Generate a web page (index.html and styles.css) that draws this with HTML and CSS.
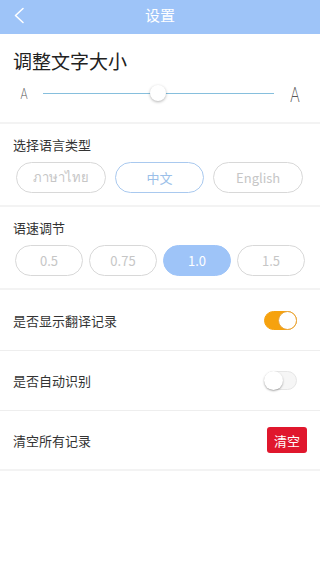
FILE: index.html
```html
<!DOCTYPE html>
<html lang="zh">
<head>
<meta charset="utf-8">
<title>设置</title>
<link rel="stylesheet" href="styles.css">
</head>
<body>
<header class="topbar">
  <svg class="back" width="34" height="34" viewBox="0 0 34 34"><polyline points="23,8.5 15.5,15.5 23,22.5" fill="none" stroke="#fff" stroke-width="1.6" stroke-linecap="round" stroke-linejoin="round"/></svg>
  <div class="title">设置</div>
</header>

<section class="fontsize">
  <div class="big-title">调整文字大小</div>
  <div class="slider-row">
    <span class="a-cell a-cell-left"><span class="a-small">A</span></span>
    <div class="track"><span class="thumb"></span></div>
    <span class="a-cell a-cell-right"><span class="a-big">A</span></span>
  </div>
</section>

<section class="choice">
  <div class="label">选择语言类型</div>
  <div class="grid3">
    <div class="pill">ภาษาไทย</div>
    <div class="pill pill-outline">中文</div>
    <div class="pill">English</div>
  </div>
</section>

<section class="choice">
  <div class="label">语速调节</div>
  <div class="grid4">
    <div class="pill">0.5</div>
    <div class="pill">0.75</div>
    <div class="pill pill-fill">1.0</div>
    <div class="pill">1.5</div>
  </div>
</section>

<div class="rows">
  <div class="row row-first">
    <span class="row-label">是否显示翻译记录</span>
    <span class="toggle on"><span class="knob"></span></span>
  </div>
  <div class="row">
    <span class="row-label">是否自动识别</span>
    <span class="toggle"><span class="knob"></span></span>
  </div>
  <div class="row row-last">
    <span class="row-label">清空所有记录</span>
    <span class="clear-btn">清空</span>
  </div>
</div>
</body>
</html>
```

FILE: styles.css
```css
* { box-sizing: border-box; margin: 0; padding: 0; }
html, body { background: #fff; }
body {
  width: 320px;
  font-family: "Noto Sans CJK SC", "Noto Sans", sans-serif;
  color: #333;
}

.topbar {
  height: 34px;
  background: #9ec4f8;
  position: relative;
  display: flex;
  align-items: center;
  justify-content: center;
}
.back { position: absolute; left: 0; top: 0; }
.title {
  color: #fff;
  font-size: 15px;
  line-height: 20px;
  margin-top: -4px;
}

.fontsize {
  height: 90px;
  padding-top: 15px;
  border-bottom: 2px solid #f3f3f3;
}
.big-title {
  font-size: 19px;
  line-height: 24px;
  padding-left: 13px;
  color: #222;
}
.slider-row {
  margin-top: 8px;
  height: 24px;
  display: flex;
  align-items: center;
}
.a-cell {
  display: flex;
  align-items: center;
  height: 24px;
  font-family: "Lato", "DejaVu Sans", sans-serif;
  font-weight: 300;
  color: #555;
}
.a-cell-left { width: 43px; padding-left: 19px; }
.a-cell-right { width: 46px; padding-left: 14px; }
.a-small {
  display: inline-block;
  font-size: 15px;
  transform: scaleX(0.72);
}
.a-big {
  display: inline-block;
  font-size: 21px;
  transform: scaleX(0.68);
}
.track {
  flex: 1;
  height: 1px;
  background: #86bfdd;
  position: relative;
}
.thumb {
  position: absolute;
  left: 107px;
  top: -8px;
  width: 16px;
  height: 16px;
  border-radius: 50%;
  background: #fff;
  box-shadow: 0 1px 3px rgba(0,0,0,0.3);
}

.choice {
  height: 83px;
  padding-top: 12px;
  border-bottom: 2px solid #f3f3f3;
}
.label {
  font-size: 13px;
  line-height: 18px;
  padding-left: 13px;
  color: #333;
}
.grid3 {
  display: grid;
  grid-template-columns: repeat(3, 1fr);
  gap: 9px;
  padding: 0 17px 0 16px;
  margin-top: 8px;
}
.grid4 {
  display: grid;
  grid-template-columns: repeat(4, 1fr);
  gap: 6px;
  padding: 0 15px;
  margin-top: 8px;
}
.pill {
  height: 31px;
  border: 1px solid #d8d8d8;
  border-radius: 16px;
  display: flex;
  align-items: center;
  justify-content: center;
  font-size: 13px;
  color: #c6c6c6;
}
.pill-outline { border-color: #a9c9ef; color: #9bbfe9; }
.pill-fill { background: #9ec4f8; border-color: #9ec4f8; color: #fff; }

.row {
  height: 60px;
  border-bottom: 1px solid #eeeeee;
  display: flex;
  align-items: center;
  justify-content: space-between;
  padding-left: 13px;
}
.row-first { height: 61px; }
.row-last { height: 60px; border-bottom: 2px solid #f3f3f3; }
.row-label { font-size: 13px; color: #333; }

.toggle {
  width: 33px;
  height: 19px;
  border-radius: 10px;
  background: #f6f6f6;
  border: 1px solid #e6e6e6;
  margin-right: 23px;
  position: relative;
}
.toggle .knob {
  position: absolute;
  left: -1px;
  top: -1px;
  width: 19px;
  height: 19px;
  border-radius: 50%;
  background: #fff;
  box-shadow: 0 1px 2px rgba(0,0,0,0.35);
}
.toggle.on { background: #f6a20e; border-color: #f6a20e; }
.toggle.on .knob {
  left: auto;
  right: -1px;
  box-shadow: none;
  border: 1px solid #e8a43a;
}

.clear-btn {
  width: 40px;
  height: 26px;
  background: #e0172d;
  border-radius: 3px;
  color: #fff;
  font-size: 13px;
  display: flex;
  align-items: center;
  justify-content: center;
  margin-right: 13px;
}
```
